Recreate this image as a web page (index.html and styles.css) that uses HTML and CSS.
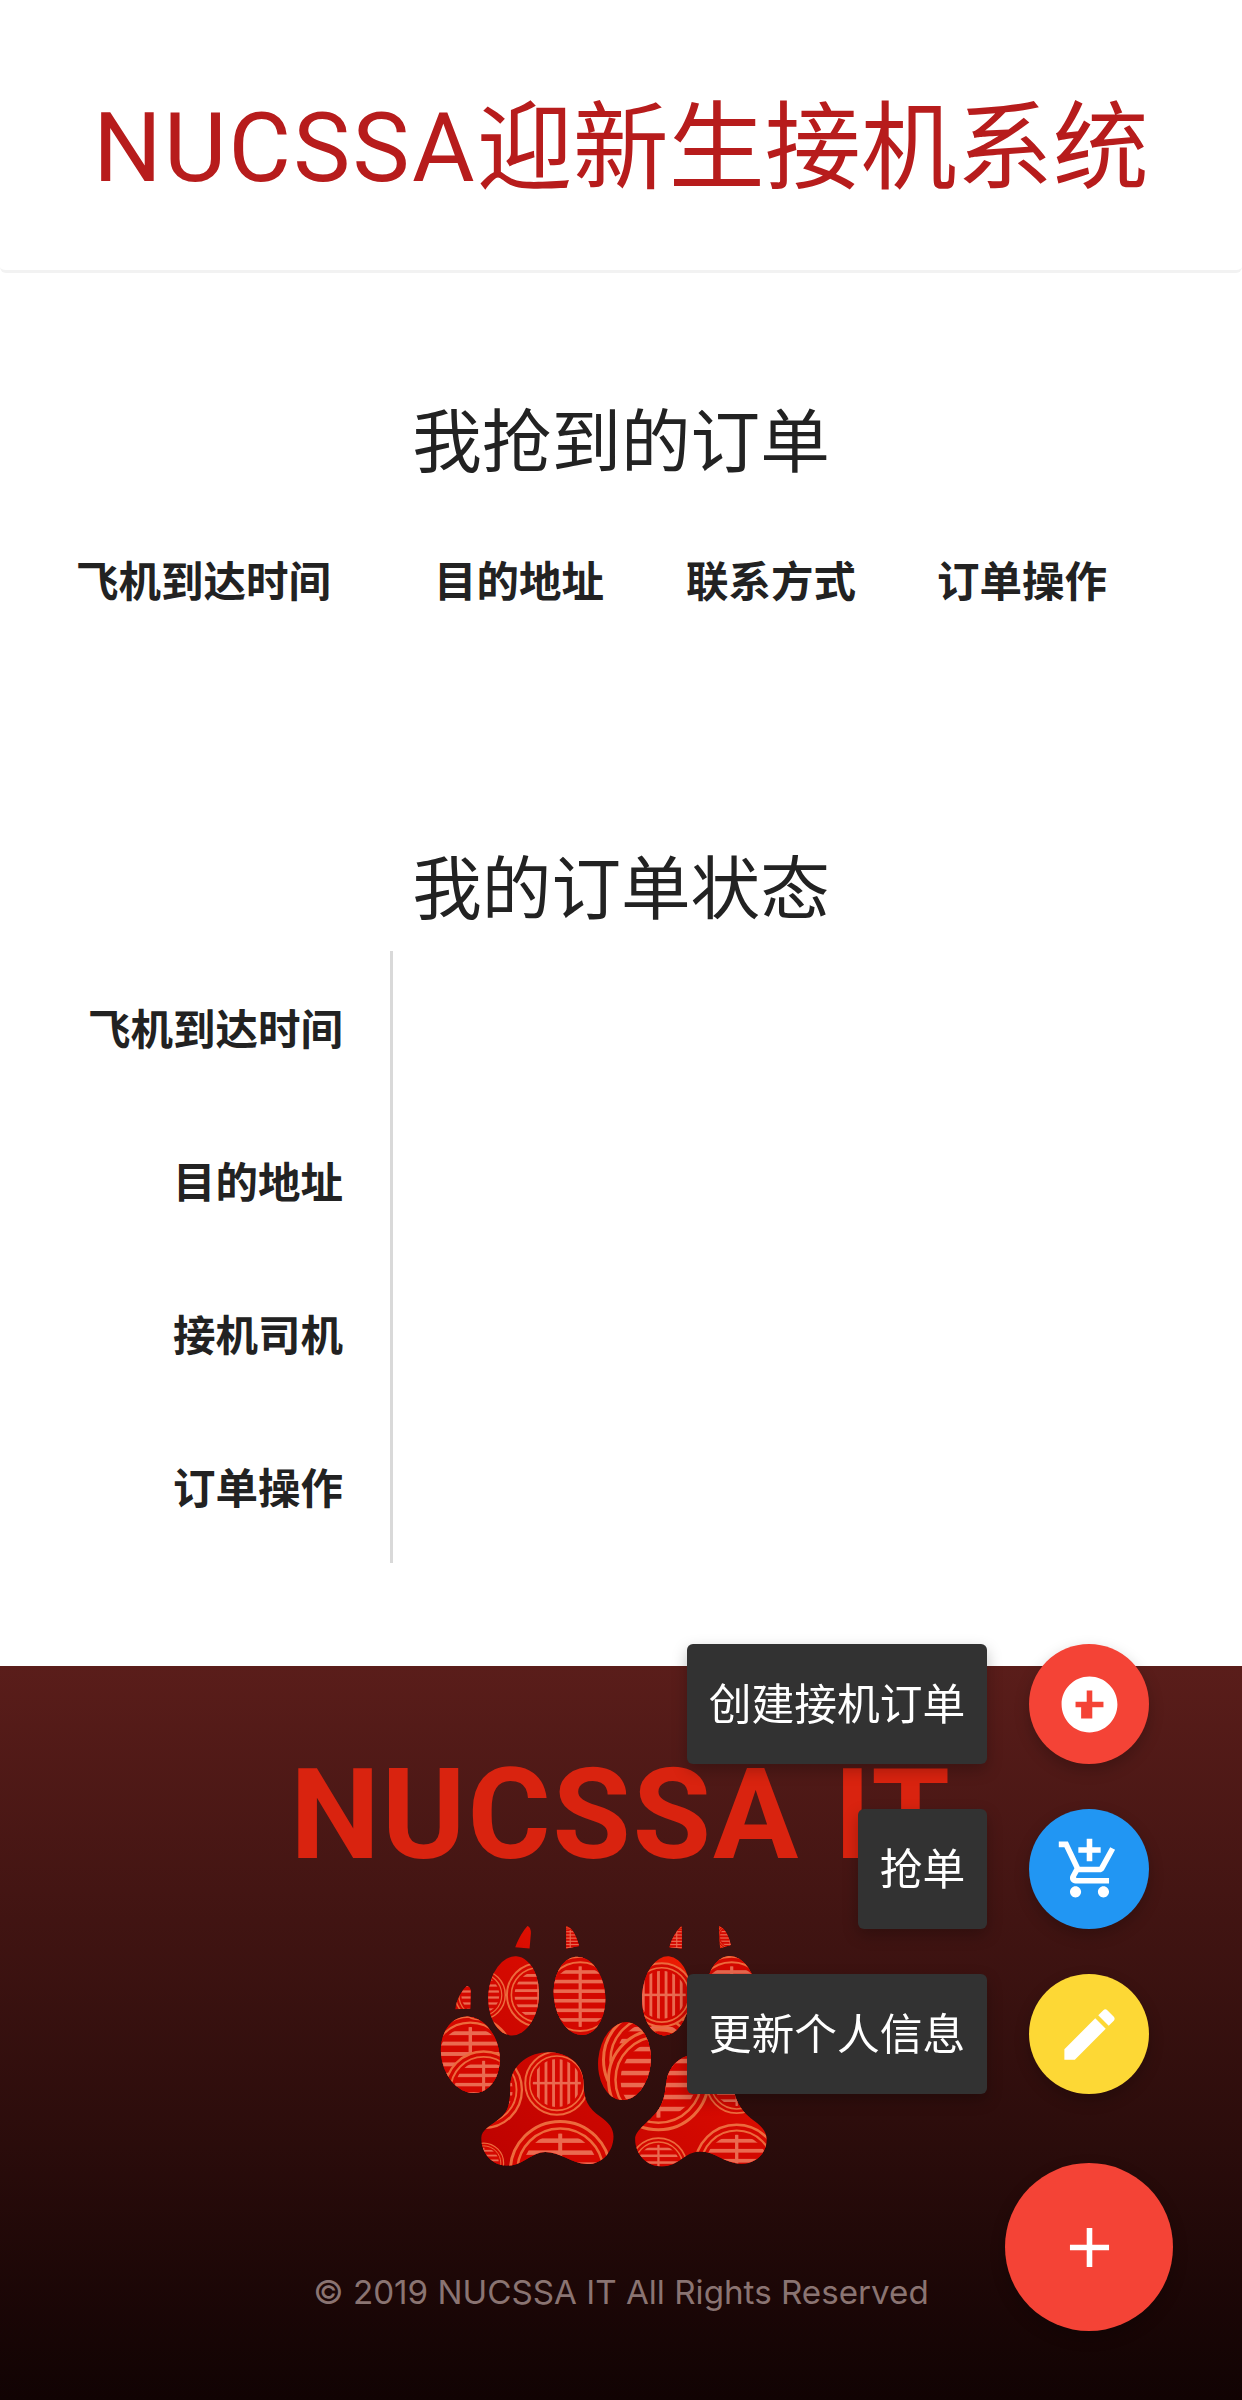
FILE: index.html
```html
<!DOCTYPE html>
<html lang="zh-CN">
<head>
    <meta charset="UTF-8">
    <meta name="viewport" content="width=device-width, initial-scale=1.0">
    <title>NUCSSA迎新生接机系统</title>
    <link rel="stylesheet" href="styles.css">
</head>
<body>

    <header class="site-header">
        <h1 class="site-title"><span class="site-title-latin">NUCSSA</span>迎新生接机系统</h1>
    </header>

    <section class="orders">
        <h2 class="section-title">我抢到的订单</h2>
        <div class="order-head">
            <div>飞机到达时间</div>
            <div>目的地址</div>
            <div>联系方式</div>
            <div>订单操作</div>
        </div>
    </section>

    <section class="status">
        <h2 class="section-title">我的订单状态</h2>
        <div class="status-table">
            <div class="status-labels">
                <div>飞机到达时间</div>
                <div>目的地址</div>
                <div>接机司机</div>
                <div>订单操作</div>
            </div>
        </div>
    </section>

    <footer class="site-footer">
        <div class="footer-title">NUCSSA IT</div>

        <!-- paw logo, cut out of a red medallion pattern -->
        <svg class="paw" viewBox="110 70 1000 740" aria-hidden="true">
            <defs>
                <linearGradient id="pawRed" x1="0" y1="1" x2="1" y2="0">
                    <stop offset="0" stop-color="#b80000"/>
                    <stop offset="0.55" stop-color="#d60a00"/>
                    <stop offset="1" stop-color="#ff2a05"/>
                </linearGradient>
                <clipPath id="pawShape">
                    <path d="M165 328C168 300 185 270 200 258Q212 262 211 275L210 326Z"/>
                    <path d="M345 142C355 115 370 90 382 78Q392 82 392 100L388 146Z"/>
                    <path d="M498 78C520 85 530 115 537 138L498 146Z"/>
                    <path d="M808 142C815 115 830 92 844 78Q846 100 845 146Z"/>
                    <path d="M957 78C975 85 987 110 992 135L960 145Z"/>
                    <ellipse cx="210" cy="465" rx="87" ry="116" transform="rotate(-12 210 465)"/>
                    <ellipse cx="340" cy="288" rx="76" ry="119" transform="rotate(4 340 288)"/>
                    <ellipse cx="538" cy="288" rx="77" ry="118" transform="rotate(-6 538 288)"/>
                    <ellipse cx="673" cy="484" rx="79" ry="117" transform="rotate(5 673 484)"/>
                    <ellipse cx="798" cy="288" rx="72" ry="119" transform="rotate(4 798 288)"/>
                    <ellipse cx="995" cy="288" rx="76" ry="120" transform="rotate(-5 995 288)"/>
                    <path d="M243 715C243 690 270 680 300 655C325 635 330 610 330 560C332 490 390 457 445 457C500 457 550 490 550 550C550 600 565 625 600 650C625 668 640 685 640 710C640 760 600 795 560 793C510 790 480 757 435 757C395 757 370 798 320 798C275 798 243 760 243 715Z"/>
                    <path d="M705 718C705 690 745 670 775 630C795 600 795 570 800 540C810 490 850 462 900 462C960 462 990 500 1000 560C1005 610 1030 640 1065 665C1085 680 1100 695 1100 720C1100 765 1060 795 1020 792C975 790 945 755 900 755C855 755 835 800 785 800C740 800 705 765 705 718Z"/>
                </clipPath>
                <clipPath id="shouInner">
                    <circle r="76"/>
                </clipPath>
                <g id="shou">
                    <circle r="100" fill="#d40800"/>
                    <circle r="100" fill="none" stroke="#ec6a3c" stroke-width="6"/>
                    <circle r="86" fill="none" stroke="#ec6a3c" stroke-width="5"/>
                    <g clip-path="url(#shouInner)" fill="#ea6a50">
                        <rect x="-80" y="-66" width="160" height="9"/>
                        <rect x="-80" y="-42" width="160" height="9"/>
                        <rect x="-80" y="-18" width="160" height="9"/>
                        <rect x="-80" y="6" width="160" height="9"/>
                        <rect x="-80" y="30" width="160" height="9"/>
                        <rect x="-80" y="54" width="160" height="9"/>
                        <rect x="-4" y="-80" width="8" height="160"/>
                    </g>
                </g>
            </defs>
            <g clip-path="url(#pawShape)">
                <rect x="110" y="70" width="1000" height="740" fill="url(#pawRed)"/>
                <use href="#shou" transform="translate(210 480) scale(1.3)"/>
                <use href="#shou" transform="translate(240 285) scale(.75)"/>
                <use href="#shou" transform="translate(415 285) scale(.95)"/>
                <use href="#shou" transform="translate(540 290) scale(1.2)"/>
                <use href="#shou" transform="translate(510 120) scale(.4)"/>
                <use href="#shou" transform="translate(760 480) scale(1.5)"/>
                <use href="#shou" transform="translate(830 120) scale(.4)"/>
                <use href="#shou" transform="translate(990 110) scale(.4)"/>
                <use href="#shou" transform="translate(995 290) scale(1.2)"/>
                <use href="#shou" transform="translate(785 285) rotate(90) scale(.95)"/>
                <use href="#shou" transform="translate(250 570) scale(1.15)"/>
                <use href="#shou" transform="translate(250 790) scale(.6)"/>
                <use href="#shou" transform="translate(480 815) scale(1.5)"/>
                <use href="#shou" transform="translate(470 550) rotate(90) scale(.95)"/>
                <use href="#shou" transform="translate(775 540) scale(1.5)"/>
                <use href="#shou" transform="translate(1010 550) scale(.9)"/>
                <use href="#shou" transform="translate(1010 800) scale(1.25)"/>
                <use href="#shou" transform="translate(775 800) scale(.85)"/>
            </g>
        </svg>

        <p class="copyright">© 2019 NUCSSA IT All Rights Reserved</p>
    </footer>

    <!-- floating action menu -->
    <div class="fab-menu">
        <div class="fab-item">
            <span class="fab-label">创建接机订单</span>
            <a class="fab fab-red" href="#">
                <svg class="fab-icon" viewBox="0 0 24 24"><path d="M12 2C6.48 2 2 6.48 2 12s4.48 10 10 10 10-4.48 10-10S17.52 2 12 2zm5 11h-4v4h-4v-4H7v-2h4V7h2v4h4v2z"/></svg>
            </a>
        </div>
        <div class="fab-item">
            <span class="fab-label">抢单</span>
            <a class="fab fab-blue" href="#">
                <svg class="fab-icon" viewBox="0 0 24 24"><path d="M11 9h2V6h3V4h-3V1h-2v3H8v2h3v3zm-4 9c-1.1 0-1.99.9-1.99 2S5.9 22 7 22s2-.9 2-2-.9-2-2-2zm10 0c-1.1 0-1.99.9-1.99 2s.89 2 1.99 2 2-.9 2-2-.9-2-2-2zm-9.83-3.25l.03-.12.9-1.63h7.45c.75 0 1.41-.41 1.75-1.03l3.86-7.01L19.42 4h-.01l-1.1 2-2.76 5H8.53l-.13-.27L6.16 6l-.95-2-.94-2H1v2h2l3.6 7.59-1.35 2.45c-.16.28-.25.61-.25.96 0 1.1.9 2 2 2h12v-2H7.42c-.13 0-.25-.11-.25-.25z"/></svg>
            </a>
        </div>
        <div class="fab-item">
            <span class="fab-label">更新个人信息</span>
            <a class="fab fab-yellow" href="#">
                <svg class="fab-icon" viewBox="0 0 24 24"><path d="M3 17.25V21h3.75L17.81 9.94l-3.75-3.75L3 17.25zM20.71 7.04c.39-.39.39-1.02 0-1.41l-2.34-2.34c-.39-.39-1.02-.39-1.41 0l-1.83 1.83 3.75 3.75 1.83-1.83z"/></svg>
            </a>
        </div>
        <a class="fab fab-large" href="#">
            <svg class="fab-icon" viewBox="0 0 24 24"><path d="M19 13h-6v6h-2v-6H5v-2h6V5h2v6h6v2z"/></svg>
        </a>
    </div>

</body>
</html>
```

FILE: styles.css
```css
html, body {
    margin: 0;
    padding: 0;
}

body {
    height: 2400px;
    overflow: hidden;
    background: #fff;
    color: #222;
    font-family: "Liberation Sans", "Noto Sans CJK SC", sans-serif;
}

/* Header */
.site-header {
    box-sizing: border-box;
    height: 273px;
    padding-top: 88px;
    border-bottom: 3px solid #f2f2f2;
    border-radius: 0 0 6px 6px;
    text-align: center;
}

.site-title {
    margin: 0;
    font-size: 96px;
    line-height: 120px;
    font-weight: 400;
    color: #b71c1c;
}

.site-title-latin {
    font-family: Roboto, "Liberation Sans", sans-serif;
    letter-spacing: 2.3px;
}

/* Sections */
.section-title {
    margin: 0;
    height: 100px;
    font-size: 69.6px;
    line-height: 100px;
    font-weight: 400;
    text-align: center;
}

.orders {
    padding-top: 120px;
}

.order-head {
    display: grid;
    grid-template-columns: 358px 252px 251px 1fr;
    margin-top: 22px;
    padding-left: 76px;
    height: 126px;
    align-items: center;
    font-size: 42.5px;
    font-weight: 700;
}

.status {
    padding-top: 199px;
}

.status-table {
    margin-top: 11px;
}

.status-labels {
    box-sizing: border-box;
    width: 393px;
    border-right: 3px solid #d9d9d9;
    padding-right: 47px;
    text-align: right;
    font-size: 42.5px;
    font-weight: 700;
}

.status-labels div {
    height: 147px;
    padding-top: 6px;
    line-height: 147px;
}

/* Footer */
.site-footer {
    box-sizing: border-box;
    margin-top: 103px;
    height: 734px;
    padding-top: 79px;
    display: flex;
    flex-direction: column;
    align-items: center;
    background: linear-gradient(180deg, #5a1d1a 0%, #110303 100%);
}

.footer-title {
    font-family: Roboto, "Liberation Sans", sans-serif;
    font-size: 127px;
    line-height: 140px;
    letter-spacing: 2px;
    font-weight: 700;
    color: #d9230f;
}

.paw {
    display: block;
    width: 333px;
    height: 247px;
    margin: 38px 35px 0 0;
}

.copyright {
    margin: 98px 0 0;
    font-family: Inter, "Liberation Sans", sans-serif;
    font-size: 33.2px;
    line-height: 48px;
    color: #8a7472;
}

/* Floating action menu */
.fab-menu {
    position: fixed;
    right: 69px;
    bottom: 69px;
    display: flex;
    flex-direction: column;
    align-items: flex-end;
}

.fab-item {
    display: flex;
    align-items: center;
    margin: 0 24px 45px 0;
}

.fab-item:nth-child(3) {
    margin-bottom: 69px;
}

.fab-label {
    box-sizing: border-box;
    height: 120px;
    padding: 0 21.75px;
    margin-right: 42px;
    border-radius: 6px;
    background: #323232;
    color: #fff;
    font-size: 42.75px;
    line-height: 122px;
    box-shadow: 0 6px 15px rgba(0, 0, 0, 0.25);
}

.fab {
    width: 120px;
    height: 120px;
    border-radius: 50%;
    display: flex;
    align-items: center;
    justify-content: center;
    box-shadow: 0 6px 15px rgba(0, 0, 0, 0.22);
}

.fab-icon {
    width: 67px;
    height: 67px;
    fill: #fff;
}

.fab-red, .fab-large { background: #f44336; }
.fab-blue { background: #2196f3; }
.fab-yellow { background: #fdd835; }

.fab-large {
    width: 168px;
    height: 168px;
}
```
